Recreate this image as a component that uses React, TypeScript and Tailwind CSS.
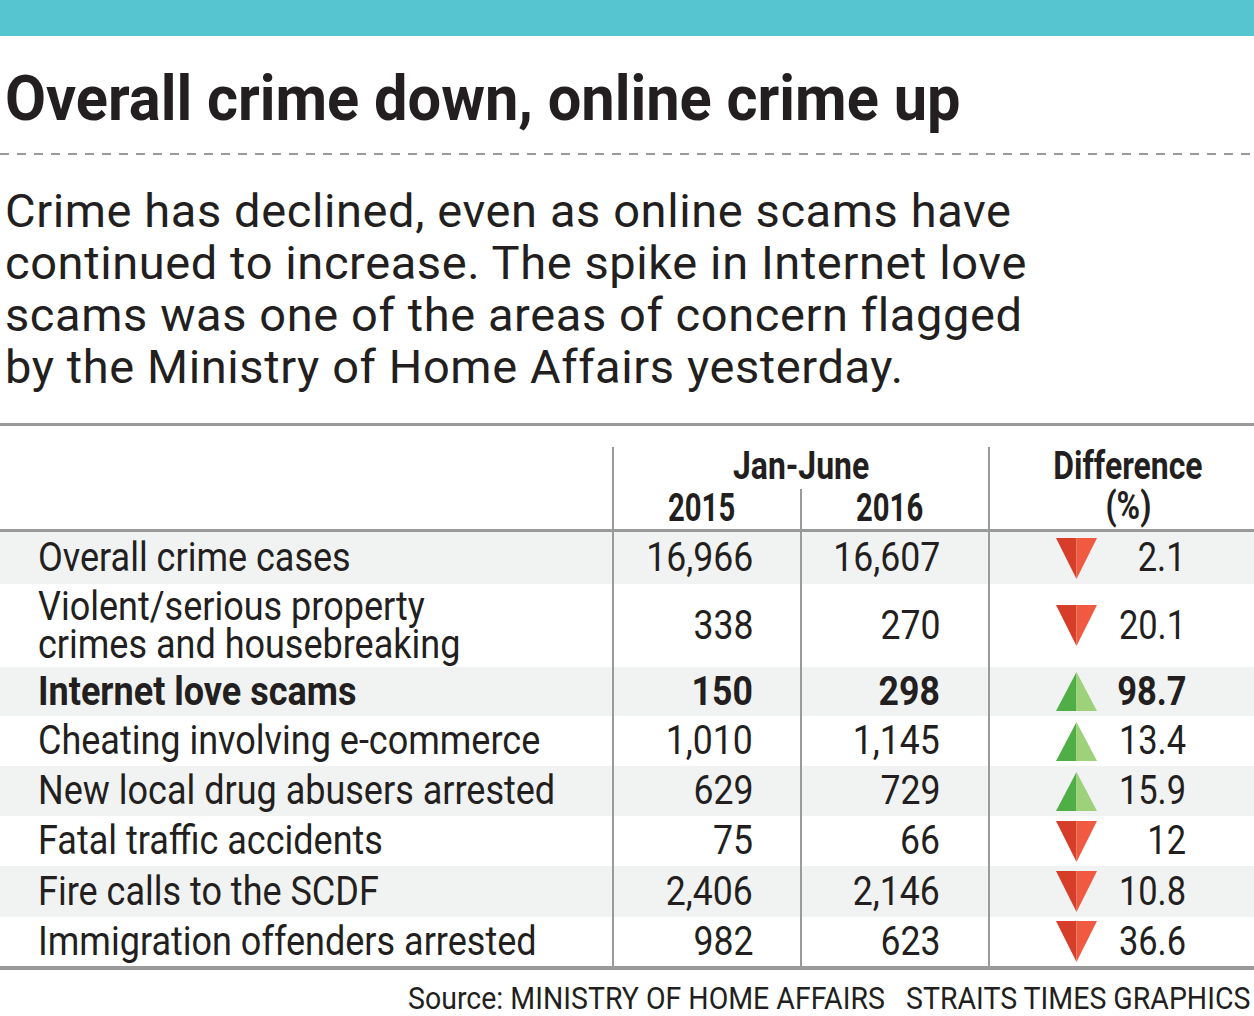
import React from "react";

type Row = {
  label: string[];
  a: string;
  b: string;
  up: boolean;
  d: string;
  h: string;
  gray: boolean;
  bold?: boolean;
};

const rows: Row[] = [
  { label: ["Overall crime cases"], a: "16,966", b: "16,607", up: false, d: "2.1", h: "h-[52px]", gray: true },
  { label: ["Violent/serious property", "crimes and housebreaking"], a: "338", b: "270", up: false, d: "20.1", h: "h-[83px]", gray: false },
  { label: ["Internet love scams"], a: "150", b: "298", up: true, d: "98.7", h: "h-[49px]", gray: true, bold: true },
  { label: ["Cheating involving e-commerce"], a: "1,010", b: "1,145", up: true, d: "13.4", h: "h-[50px]", gray: false },
  { label: ["New local drug abusers arrested"], a: "629", b: "729", up: true, d: "15.9", h: "h-[50px]", gray: true },
  { label: ["Fatal traffic accidents"], a: "75", b: "66", up: false, d: "12", h: "h-[50px]", gray: false },
  { label: ["Fire calls to the SCDF"], a: "2,406", b: "2,146", up: false, d: "10.8", h: "h-[51px]", gray: true },
  { label: ["Immigration offenders arrested"], a: "982", b: "623", up: false, d: "36.6", h: "h-[49px]", gray: false },
];

function Tri({ up }: { up: boolean }) {
  if (up) {
    return (
      <svg width="41" height="39" viewBox="0 0 41 39" className="block">
        <polygon points="20.5,0 0,39 20.5,39" fill="#4fae46" />
        <polygon points="20.5,0 41,39 20.5,39" fill="#9dd17a" />
      </svg>
    );
  }
  return (
    <svg width="41" height="41" viewBox="0 0 41 41" className="block">
      <polygon points="0,0 20.5,0 20.5,41" fill="#d63e2a" />
      <polygon points="20.5,0 41,0 20.5,41" fill="#f05a40" />
    </svg>
  );
}

export default function App() {
  return (
    <div className="w-[1254px] h-[1016px] bg-white overflow-hidden text-[#231f20] font-['Roboto','Noto_Sans',sans-serif]">
      <div className="h-[36px] bg-[#56c5cf]" />
      <h1 className="mt-[31px] pl-[5px] text-[63px] leading-[63px] font-bold whitespace-nowrap">
        <span className="inline-block origin-left scale-x-[0.945]">Overall crime down, online crime up</span>
      </h1>
      <div className="mt-[23px] h-[2px] bg-[repeating-linear-gradient(90deg,#9a9a9a_0_9px,transparent_9px_17px)]" />
      <div className="mt-[30px] pl-[5px] text-[47px] leading-[52px] tracking-[0.6px] whitespace-nowrap">
        <div>Crime has declined, even as online scams have</div>
        <div>continued to increase. The spike in Internet love</div>
        <div>scams was one of the areas of concern flagged</div>
        <div>by the Ministry of Home Affairs yesterday.</div>
      </div>

      <div className="mt-[30px] border-t-[3px] border-[#9a9a9a]">
        {/* header */}
        <div className="flex h-[103px] font-bold text-[38px] leading-[38px]">
          <div className="w-[612px]" />
          <div className="w-[376px] mt-[21px] border-l-2 border-[#9a9a9a] flex flex-col">
            <div className="h-[42px] flex justify-center">
              <span className="inline-block scale-x-[0.84]">Jan-June</span>
            </div>
            <div className="flex flex-1">
              <div className="w-[186px] flex justify-center pr-[10px]">
                <span className="inline-block scale-x-[0.77]">2015</span>
              </div>
              <div className="flex-1 border-l-2 border-[#9a9a9a] flex justify-center pr-[10px]">
                <span className="inline-block scale-x-[0.77]">2016</span>
              </div>
            </div>
          </div>
          <div className="flex-1 mt-[21px] border-l-2 border-[#9a9a9a] flex flex-col items-center pl-[12px]">
            <div className="h-[40px]">
              <span className="inline-block scale-x-[0.84]">Difference</span>
            </div>
            <div>
              <span className="inline-block scale-x-[0.84]">(%)</span>
            </div>
          </div>
        </div>

        {/* body */}
        <div className="border-t-[3px] border-b-4 border-[#9a9a9a] text-[40px]">
          {rows.map((r, i) => (
            <div
              key={i}
              className={`flex ${r.h} ${r.gray ? "bg-[#f1f2f2]" : "bg-white"} ${r.bold ? "font-bold" : "font-normal"}`}
            >
              <div className="w-[612px] pl-[38px] flex flex-col justify-center leading-[38px] whitespace-nowrap">
                {r.label.map((l, j) => (
                  <div key={j}>
                    <span className="inline-block origin-left scale-x-[0.9]">{l}</span>
                  </div>
                ))}
              </div>
              <div className="w-[188px] border-l-2 border-[#9a9a9a] flex items-center justify-end pr-[47px] leading-none">
                <span className="inline-block origin-right scale-x-[0.89]">{r.a}</span>
              </div>
              <div className="w-[188px] border-l-2 border-[#9a9a9a] flex items-center justify-end pr-[48px] leading-none">
                <span className="inline-block origin-right scale-x-[0.89]">{r.b}</span>
              </div>
              <div className="flex-1 border-l-2 border-[#9a9a9a] flex items-center justify-between pl-[66px] pr-[68px] leading-none">
                <Tri up={r.up} />
                <span className="inline-block origin-right scale-x-[0.86]">{r.d}</span>
              </div>
            </div>
          ))}
        </div>
      </div>

      <div className="mt-[12px] pr-[4px] flex justify-end text-[32px] leading-[32px] whitespace-nowrap">
        <span className="inline-block origin-right scale-x-[0.89]">
          Source: MINISTRY OF HOME AFFAIRS&nbsp;&nbsp; STRAITS TIMES GRAPHICS
        </span>
      </div>
    </div>
  );
}
